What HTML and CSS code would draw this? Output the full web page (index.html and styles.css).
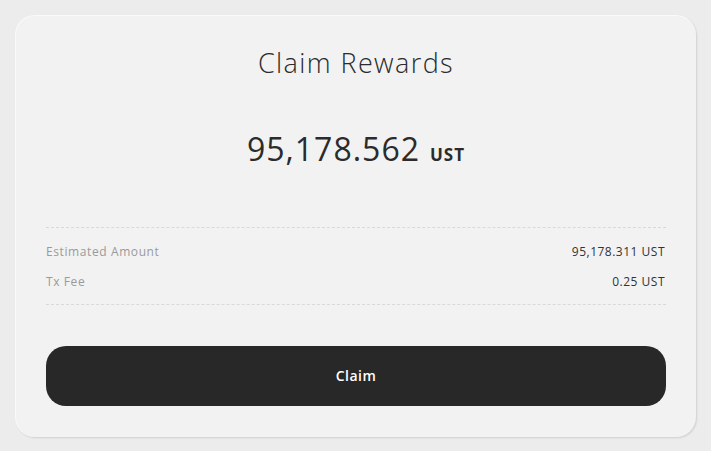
FILE: index.html
```html
<!DOCTYPE html>
<html>
<head>
<meta charset="utf-8">
<link rel="stylesheet" href="styles.css">
</head>
<body>
<div class="card">
  <h1 class="title">Claim Rewards</h1>
  <div class="amount"><span class="num">95,178.562</span><span class="unit">UST</span></div>
  <div class="details">
    <div class="row"><span class="label">Estimated Amount</span><span class="value">95,178.311 UST</span></div>
    <div class="row"><span class="label">Tx Fee</span><span class="value">0.25 UST</span></div>
  </div>
  <button class="btn">Claim</button>
</div>
</body>
</html>
```
FILE: styles.css
```css
html, body { margin: 0; padding: 0; }
body {
  background: #ececec;
  width: 711px;
  height: 451px;
  font-family: "Open Sans", "Noto Sans", sans-serif;
  padding: 15px 15px 0 15px;
  box-sizing: border-box;
}
.card {
  width: 681px;
  height: 422px;
  box-sizing: border-box;
  background: #f2f2f2;
  border-radius: 20px;
  border-top: 1px solid #fafafa;
  border-left: 1px solid #fafafa;
  box-shadow: 1px 1px 2px rgba(0,0,0,0.12);
  padding: 30px 30px 30px 30px;
  display: flex;
  flex-direction: column;
}
.title {
  margin: 0;
  text-align: center;
  font-weight: 300;
  font-size: 27px;
  letter-spacing: 1.4px;
  line-height: 34px;
  color: #2b2b2b;
}
.amount {
  margin-top: 49px;
  display: flex;
  justify-content: center;
  align-items: baseline;
  color: #2b2b2b;
}
.num {
  font-size: 32px;
  font-weight: 400;
  letter-spacing: 1px;
  line-height: 40px;
}
.unit {
  font-size: 17px;
  font-weight: 700;
  letter-spacing: 1px;
  margin-left: 10px;
}
.details {
  margin-top: 58px;
  border-top: 1px dashed #d9d9d9;
  border-bottom: 1px dashed #d9d9d9;
  padding: 15px 0 13px;
  display: flex;
  flex-direction: column;
  gap: 12px;
}
.row {
  display: flex;
  justify-content: space-between;
  font-size: 12px;
  line-height: 18px;
}
.label { color: #9a9a9a; letter-spacing: 0.6px; }
.value { color: #333; letter-spacing: 0.5px; margin-right: 1px; }
.btn {
  margin-top: 41px;
  height: 60px;
  border: none;
  border-radius: 20px;
  background: #282828;
  color: #fff;
  font-family: "Open Sans", sans-serif;
  font-size: 14px;
  font-weight: 600;
  letter-spacing: 0.5px;
  line-height: 18px;
}
```
